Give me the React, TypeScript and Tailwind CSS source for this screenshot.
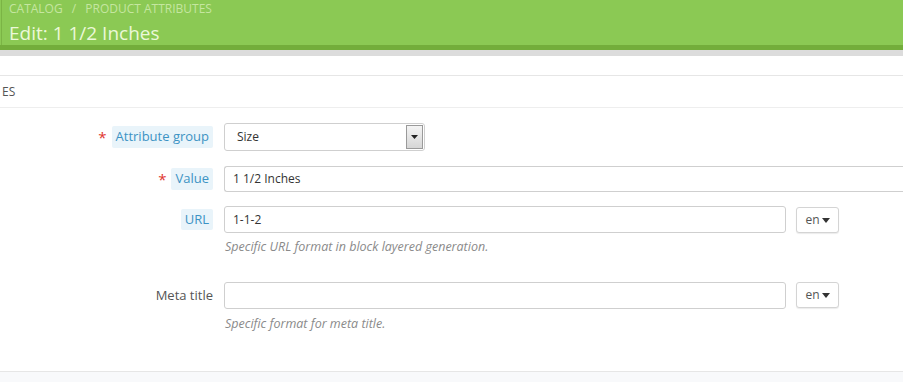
function Label({ text, required, hint }: { text: string; required?: boolean; hint?: boolean }) {
  return (
    <div className="flex w-[224px] shrink-0 items-center justify-end pr-[11px]">
      {required && <span className="mr-[5px] text-[15px] leading-none text-[#e0342f]">*</span>}
      <span
        className={
          hint
            ? 'rounded-[2px] bg-[#e9f4fa] px-[4px] py-[1px] text-[13px] text-[#3c93c4]'
            : 'text-[13px] text-[#555]'
        }
      >
        {text}
      </span>
    </div>
  )
}

function LangButton() {
  return (
    <button className="ml-[10px] flex h-[26px] w-[43px] items-center justify-center gap-[2px] rounded-[3px] border border-[#d4d4d4] bg-white text-[12px] text-[#555] shadow-[0_1px_1px_rgba(0,0,0,0.08)]">
      en
      <svg width="8" height="5" viewBox="0 0 8 5" className="mt-[1px]">
        <path d="M0 0h8L4 5z" fill="#333" />
      </svg>
    </button>
  )
}

export default function App() {
  return (
    <div className="h-[382px] w-[903px] overflow-hidden bg-white font-['Open_Sans',sans-serif]">
      {/* Page header */}
      <div className="border-b-[5px] border-[#73ad3b] bg-[#8bc954]">
        <div className="ml-px h-[45px] border-l border-[#7bb445] pl-[7px]">
          <div className="pt-[1px] text-[12px] uppercase leading-[16px] text-[#c5e6a0]">
            Catalog <span className="mx-[6px]">/</span> Product attributes
          </div>
          <h1 className="mt-[4px] text-[19px] leading-[24px] text-[#ebf8d9]">Edit: 1 1/2 Inches</h1>
        </div>
      </div>
      <div className="h-[6px] bg-[#dcdcdc]" />

      <div className="h-[19px]" />

      {/* Panel */}
      <div className="border-y border-[#e6e6e6]">
        <div className="flex h-[32px] items-center border-b border-[#eeeeee] pl-[2px] text-[12px] uppercase text-[#555]">
          es
        </div>

        <div className="flex flex-col pt-[15px] pb-[37px]">
          <div className="flex h-[28px] items-center">
            <Label text="Attribute group" required hint />
            <div className="flex h-[28px] w-[201px] items-center justify-between rounded-[3px] border border-[#cfcfcf] bg-white pl-[12px] pr-[1px] text-[12px] text-[#333]">
              Size
              <span className="flex h-[24px] w-[17px] items-center justify-center border border-[#9a9a9a] bg-gradient-to-b from-[#f4f4f4] to-[#d6d6d6]">
                <svg width="7" height="4" viewBox="0 0 7 4">
                  <path d="M0 0h7L3.5 4z" fill="#222" />
                </svg>
              </span>
            </div>
          </div>

          <div className="mt-[15px] flex h-[26px] items-center">
            <Label text="Value" required hint />
            <div className="flex h-[26px] flex-1 items-center rounded-l-[3px] border border-r-0 border-[#cfcfcf] pl-[8px] text-[12px] text-[#333]">
              1 1/2 Inches
            </div>
          </div>

          <div className="mt-[14px] flex h-[27px] items-center">
            <Label text="URL" hint />
            <div className="flex h-[27px] w-[562px] items-center rounded-[3px] border border-[#cfcfcf] pl-[8px] text-[12px] text-[#333]">
              1-1-2
            </div>
            <LangButton />
          </div>
          <p className="ml-[225px] mt-[5px] text-[12.5px] italic text-[#8a8a8a]">
            Specific URL format in block layered generation.
          </p>

          <div className="mt-[25px] flex h-[27px] items-center">
            <Label text="Meta title" />
            <div className="h-[27px] w-[562px] rounded-[3px] border border-[#cfcfcf]" />
            <LangButton />
          </div>
          <p className="ml-[225px] mt-[6px] text-[12.5px] italic text-[#8a8a8a]">Specific format for meta title.</p>
        </div>
      </div>
      <div className="h-[20px] bg-[#f8f9fb]" />
    </div>
  )
}
